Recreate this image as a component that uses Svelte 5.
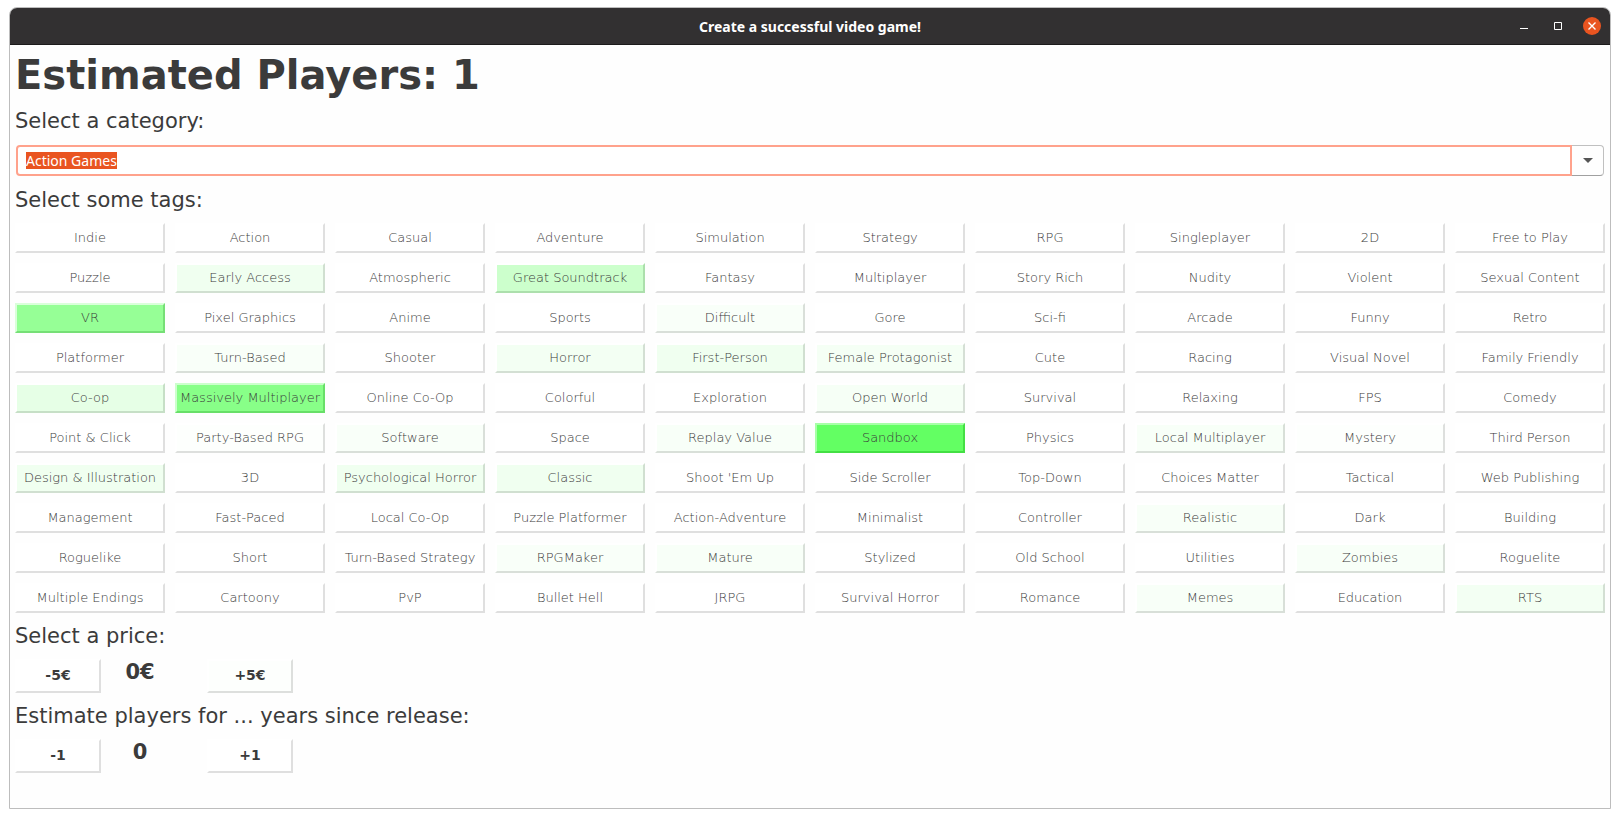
<script>
  import { onMount } from 'svelte';

  let category = $state('Action Games');
  let price = $state(0);
  let years = $state(0);
  let field;

  const names = [
    'Indie', 'Action', 'Casual', 'Adventure', 'Simulation', 'Strategy', 'RPG', 'Singleplayer', '2D', 'Free to Play',
    'Puzzle', 'Early Access', 'Atmospheric', 'Great Soundtrack', 'Fantasy', 'Multiplayer', 'Story Rich', 'Nudity', 'Violent', 'Sexual Content',
    'VR', 'Pixel Graphics', 'Anime', 'Sports', 'Difficult', 'Gore', 'Sci-fi', 'Arcade', 'Funny', 'Retro',
    'Platformer', 'Turn-Based', 'Shooter', 'Horror', 'First-Person', 'Female Protagonist', 'Cute', 'Racing', 'Visual Novel', 'Family Friendly',
    'Co-op', 'Massively Multiplayer', 'Online Co-Op', 'Colorful', 'Exploration', 'Open World', 'Survival', 'Relaxing', 'FPS', 'Comedy',
    'Point & Click', 'Party-Based RPG', 'Software', 'Space', 'Replay Value', 'Sandbox', 'Physics', 'Local Multiplayer', 'Mystery', 'Third Person',
    'Design & Illustration', '3D', 'Psychological Horror', 'Classic', "Shoot 'Em Up", 'Side Scroller', 'Top-Down', 'Choices Matter', 'Tactical', 'Web Publishing',
    'Management', 'Fast-Paced', 'Local Co-Op', 'Puzzle Platformer', 'Action-Adventure', 'Minimalist', 'Controller', 'Realistic', 'Dark', 'Building',
    'Roguelike', 'Short', 'Turn-Based Strategy', 'RPGMaker', 'Mature', 'Stylized', 'Old School', 'Utilities', 'Zombies', 'Roguelite',
    'Multiple Endings', 'Cartoony', 'PvP', 'Bullet Hell', 'JRPG', 'Survival Horror', 'Romance', 'Memes', 'Education', 'RTS'
  ];

  // Red and blue channel of a tag's face; the lower it is, the greener the tag.
  const tints = {
    'Early Access': 240, 'Great Soundtrack': 204, VR: 150, Difficult: 249, 'Turn-Based': 249,
    Horror: 243, 'First-Person': 240, 'Female Protagonist': 245, 'Co-op': 230,
    'Massively Multiplayer': 136, 'Open World': 246, 'Party-Based RPG': 253, Software: 249,
    'Replay Value': 248, Sandbox: 99, 'Local Multiplayer': 248, Mystery: 253,
    'Design & Illustration': 240, 'Psychological Horror': 240, Classic: 240, Realistic: 248,
    RPGMaker: 249, Mature: 248, Zombies: 248, Memes: 248, RTS: 243
  };

  function shade(tint) {
    const light = Math.min(255, tint + 68);
    const dark = tint - 32;
    return `--face: rgb(${tint},255,${tint}); --light: rgb(${light},255,${light}); --dark: rgb(${dark},223,${dark})`;
  }

  onMount(() => {
    field.focus();
    field.select();
  });
</script>

<div class="window">
  <header>
    <span class="title">Create a successful video game!</span>
    <div class="controls">
      <button aria-label="Minimize"><svg width="18" height="18" viewBox="0 0 18 18"><path d="M5 11.5h8" stroke="#fff" /></svg></button>
      <button aria-label="Maximize"><svg width="18" height="18" viewBox="0 0 18 18"><path d="M5.500 5.500h7v7h-7z" fill="none" stroke="#fff" /></svg></button>
      <button class="close" aria-label="Close"><svg width="18" height="18" viewBox="0 0 18 18"><path d="M5.500 5.500l7 7M12.500 5.500l-7 7" stroke="#fff" stroke-width="1.400" /></svg></button>
    </div>
  </header>

  <main>
    <h1>Estimated Players: 1</h1>

    <label class="heading" for="category">Select a category:</label>
    <div class="combo">
      <input id="category" type="text" bind:this={field} bind:value={category} spellcheck="false" autocomplete="off" />
      <button aria-label="Show categories"><svg width="10" height="5" viewBox="0 0 10 5"><path d="M0 0h10L5 5z" fill="#555" /></svg></button>
    </div>

    <h2 class="heading">Select some tags:</h2>
    <div class="tags">
      {#each names as name}
        <button class="relief" style={shade(tints[name] ?? 255)}>{name}</button>
      {/each}
    </div>

    <h2 class="heading">Select a price:</h2>
    <div class="stepper">
      <button class="relief" onclick={() => (price = Math.max(0, price - 5))}>-5€</button>
      <output>{price}€</output>
      <button class="relief" style={shade(253)} onclick={() => (price += 5)}>+5€</button>
    </div>

    <h2 class="heading">Estimate players for ... years since release:</h2>
    <div class="stepper">
      <button class="relief" onclick={() => (years = Math.max(0, years - 1))}>-1</button>
      <output>{years}</output>
      <button class="relief" onclick={() => (years += 1)}>+1</button>
    </div>
  </main>
</div>

<style>
  :global(body) {
    background: #fff;
  }

  .window {
    box-sizing: border-box;
    min-height: calc(100vh - 16px);
    margin: 7px 9px 9px;
    border: 1px solid #bdbdbd;
    border-radius: 8px 8px 0 0;
    overflow: hidden;
    background: #fefefe;
    color: #3b3b3b;
    font-family: 'DejaVu Sans', sans-serif;
  }

  button {
    padding: 0;
    border: 0;
    background: none;
    font: inherit;
    color: inherit;
  }

  header {
    box-sizing: border-box;
    display: grid;
    grid-template-columns: 1fr auto 1fr;
    align-items: center;
    height: 37px;
    padding: 0 9px;
    background: #323031;
    border-bottom: 1px solid #1c1b1b;
  }

  .title {
    grid-column: 2;
    padding-top: 2px;
    color: #fff;
    font: bold 14px/20px 'Noto Sans', sans-serif;
  }

  .controls {
    display: flex;
    justify-content: flex-end;
    gap: 16px;
  }

  .controls button {
    width: 18px;
    height: 18px;
    border-radius: 50%;
  }

  .controls .close {
    background: #e95420;
  }

  svg {
    display: block;
  }

  main {
    padding: 5px;
  }

  h1 {
    margin: 0 0 1px;
    font-size: 40px;
    line-height: 50px;
  }

  .heading {
    display: block;
    margin: 0;
    font-size: 21px;
    font-weight: normal;
    line-height: 40px;
  }

  .combo {
    display: flex;
    height: 31px;
    margin: 4px 1px;
  }

  .combo input {
    flex: 1;
    min-width: 0;
    padding: 0 8px;
    border: 2px solid #ffa28c;
    border-radius: 4px 0 0 4px;
    outline: 0;
    background: #fff;
    color: #3b3b3b;
    font: 14px/17px 'Noto Sans', sans-serif;
  }

  .combo input::selection {
    background: #e95420;
    color: #fff;
  }

  .combo button {
    box-sizing: border-box;
    display: grid;
    place-items: center;
    width: 32px;
    border: 1px solid #c0c0c0;
    border-bottom-color: #a0a0a0;
    border-left: 0;
    border-radius: 0 4px 4px 0;
  }

  .tags {
    display: grid;
    grid-template-columns: repeat(10, minmax(0, 1fr));
    gap: 10px;
    padding: 3px 0;
  }

  .relief {
    padding-bottom: 2px;
    border: 2px solid;
    border-color: var(--light, #fff) var(--dark, #dfdfdf) var(--dark, #dfdfdf) var(--light, #fff);
    background: var(--face, #fff);
  }

  .tags .relief {
    height: 30px;
    font-size: 13px;
    font-weight: 200;
    white-space: nowrap;
  }

  .stepper {
    display: grid;
    grid-template-columns: repeat(3, 86px);
    gap: 10px;
    padding: 3px 0;
  }

  .stepper .relief {
    height: 34px;
    font-size: 14px;
    font-weight: bold;
  }

  .stepper output {
    padding-right: 28px;
    text-align: center;
    font-size: 21px;
    font-weight: bold;
    line-height: 26px;
  }
</style>
